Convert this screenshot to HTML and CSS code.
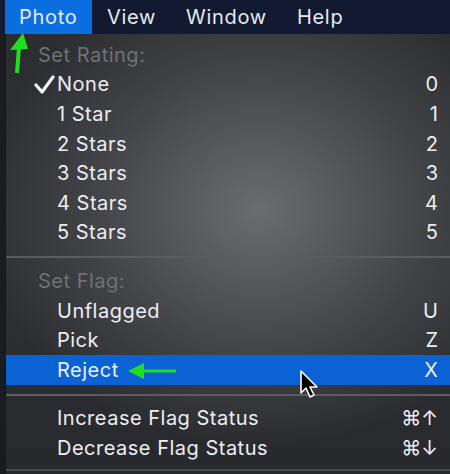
FILE: index.html
```html
<!DOCTYPE html>
<html>
<head>
<meta charset="utf-8">
<link rel="stylesheet" href="styles.css">
</head>
<body>
<div class="screen">
  <div class="menubar">
    <div class="mb-item active">Photo</div>
    <div class="mb-item">View</div>
    <div class="mb-item">Window</div>
    <div class="mb-item">Help</div>
  </div>
  <div class="menu">
    <div class="row header">Set Rating:</div>
    <div class="row"><svg class="check" width="22" height="20" viewBox="0 0 22 20"><path d="M2 10 L8 17 L19 2" stroke="#f2f3f5" stroke-width="3.2" fill="none" stroke-linecap="round" stroke-linejoin="round"/></svg><span class="label">None</span><span class="key">0</span></div>
    <div class="row"><span class="label">1 Star</span><span class="key">1</span></div>
    <div class="row"><span class="label">2 Stars</span><span class="key">2</span></div>
    <div class="row"><span class="label">3 Stars</span><span class="key">3</span></div>
    <div class="row"><span class="label">4 Stars</span><span class="key">4</span></div>
    <div class="row"><span class="label">5 Stars</span><span class="key">5</span></div>
    <div class="sep"></div>
    <div class="row header">Set Flag:</div>
    <div class="row"><span class="label">Unflagged</span><span class="key">U</span></div>
    <div class="row"><span class="label">Pick</span><span class="key">Z</span></div>
    <div class="row selected"><span class="label">Reject</span><span class="key">X</span></div>
    <div class="sep"></div>
    <div class="row"><span class="label">Increase Flag Status</span><span class="key">⌘↑</span></div>
    <div class="row"><span class="label">Decrease Flag Status</span><span class="key">⌘↓</span></div>
    <div class="sep last"></div>
  </div>

  <svg class="arrow-up" width="40" height="50" viewBox="0 0 40 50">
    <path d="M19 14 L17 40" stroke="#1fe01f" stroke-width="4" fill="none"/>
    <polygon points="23,0 10,17 28,16" fill="#1fe01f"/>
  </svg>
  <svg class="arrow-left" width="60" height="24" viewBox="0 0 60 24">
    <path d="M12 12 L48 12" stroke="#1fe01f" stroke-width="3" fill="none"/>
    <polygon points="0,12 16,4 16,20" fill="#1fe01f"/>
  </svg>
  <svg class="cursor" width="24" height="32" viewBox="0 0 24 32">
    <path d="M2 1 L2 23 L7 18 L11 27 L15 25 L11 17 L18 17 Z" fill="#000" stroke="#fff" stroke-width="1.6" stroke-linejoin="round"/>
  </svg>
</div>
</body>
</html>
```
FILE: styles.css
```css
* { box-sizing: border-box; }
html, body {
  margin: 0;
  padding: 0;
  background: #1b1c1f;
}
.screen {
  position: relative;
  width: 450px;
  height: 474px;
  overflow: hidden;
  font-family: Inter, "Noto Sans", sans-serif;
  color: #eceef2;
}
.menubar {
  height: 34px;
  background: #111a31;
  display: flex;
  align-items: stretch;
  padding-left: 5px;
}
.mb-item {
  display: flex;
  align-items: center;
  padding: 0 15px;
  font-size: 20px;
  letter-spacing: 0.7px;
  color: #e6e9f0;
}
.mb-item.active {
  background: #0a6ee0;
  padding: 0 14px;
  width: 87px;
}
.menu {
  margin-left: 5px;
  height: 440px;
  border-left: 1px solid #151618;
  padding-top: 6px;
  background:
    radial-gradient(ellipse 280px 240px at 57% 40%, #6a6c70 0%, #56585c 30%, #404246 62%, rgba(44,45,49,0) 100%),
    linear-gradient(180deg, #2c2d31 0%, #2f3034 50%, #28292d 100%);
}
.row {
  height: 29.6px;
  display: flex;
  align-items: center;
  position: relative;
  padding-left: 51px;
  padding-right: 12px;
  font-size: 20px;
  letter-spacing: 0.5px;
}
.row.header {
  padding-left: 32px;
  color: #6f7074;
}
.row.selected {
  background: #0b62d4;
}
.check {
  position: absolute;
  left: 28px;
  top: 5px;
}
.label { flex: 1; }
.key {
  text-align: right;
  letter-spacing: 0;
}
.sep {
  height: 2px;
  background: #5b5c60;
  margin: 9px 0 8px;
}
.sep.last {
  margin-top: 6px;
  background: #4a4b4f;
}
.arrow-up {
  position: absolute;
  left: 0;
  top: 33px;
}
.arrow-left {
  position: absolute;
  left: 128px;
  top: 359px;
}
.cursor {
  position: absolute;
  left: 299px;
  top: 370px;
}
```
